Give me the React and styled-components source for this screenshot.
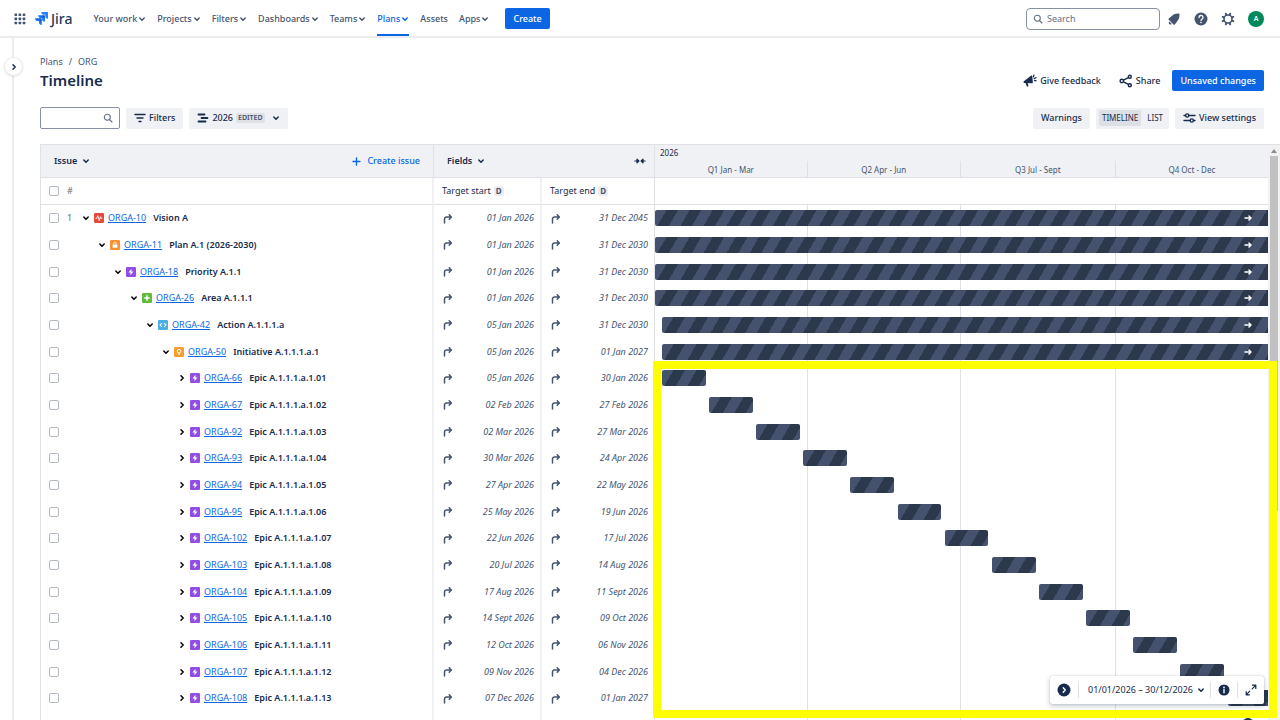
import { useState } from "react";
import styled, { createGlobalStyle, css } from "styled-components";

const DAY = 24 * 60 * 60 * 1000;
const RANGE_START = Date.UTC(2026, 0, 1);
const RANGE_DAYS = 364;

const navItems = [
  { label: "Your work", menu: true },
  { label: "Projects", menu: true },
  { label: "Filters", menu: true },
  { label: "Dashboards", menu: true },
  { label: "Teams", menu: true },
  { label: "Plans", menu: true, active: true },
  { label: "Assets" },
  { label: "Apps", menu: true },
];

const quarters = ["Q1 Jan - Mar", "Q2 Apr - Jun", "Q3 Jul - Sept", "Q4 Oct - Dec"];

const issues = [
  { key: "ORGA-10", name: "Vision A", type: "vision", level: 0, start: "2026-01-01", end: "2045-12-31" },
  { key: "ORGA-11", name: "Plan A.1 (2026-2030)", type: "plan", level: 1, start: "2026-01-01", end: "2030-12-31" },
  { key: "ORGA-18", name: "Priority A.1.1", type: "epic", level: 2, start: "2026-01-01", end: "2030-12-31" },
  { key: "ORGA-26", name: "Area A.1.1.1", type: "area", level: 3, start: "2026-01-01", end: "2030-12-31" },
  { key: "ORGA-42", name: "Action A.1.1.1.a", type: "action", level: 4, start: "2026-01-05", end: "2030-12-31" },
  { key: "ORGA-50", name: "Initiative A.1.1.1.a.1", type: "initiative", level: 5, start: "2026-01-05", end: "2027-01-01" },
  { key: "ORGA-66", name: "Epic A.1.1.1.a.1.01", type: "epic", level: 6, start: "2026-01-05", end: "2026-01-30" },
  { key: "ORGA-67", name: "Epic A.1.1.1.a.1.02", type: "epic", level: 6, start: "2026-02-02", end: "2026-02-27" },
  { key: "ORGA-92", name: "Epic A.1.1.1.a.1.03", type: "epic", level: 6, start: "2026-03-02", end: "2026-03-27" },
  { key: "ORGA-93", name: "Epic A.1.1.1.a.1.04", type: "epic", level: 6, start: "2026-03-30", end: "2026-04-24" },
  { key: "ORGA-94", name: "Epic A.1.1.1.a.1.05", type: "epic", level: 6, start: "2026-04-27", end: "2026-05-22" },
  { key: "ORGA-95", name: "Epic A.1.1.1.a.1.06", type: "epic", level: 6, start: "2026-05-25", end: "2026-06-19" },
  { key: "ORGA-102", name: "Epic A.1.1.1.a.1.07", type: "epic", level: 6, start: "2026-06-22", end: "2026-07-17" },
  { key: "ORGA-103", name: "Epic A.1.1.1.a.1.08", type: "epic", level: 6, start: "2026-07-20", end: "2026-08-14" },
  { key: "ORGA-104", name: "Epic A.1.1.1.a.1.09", type: "epic", level: 6, start: "2026-08-17", end: "2026-09-11" },
  { key: "ORGA-105", name: "Epic A.1.1.1.a.1.10", type: "epic", level: 6, start: "2026-09-14", end: "2026-10-09" },
  { key: "ORGA-106", name: "Epic A.1.1.1.a.1.11", type: "epic", level: 6, start: "2026-10-12", end: "2026-11-06" },
  { key: "ORGA-107", name: "Epic A.1.1.1.a.1.12", type: "epic", level: 6, start: "2026-11-09", end: "2026-12-04" },
  { key: "ORGA-108", name: "Epic A.1.1.1.a.1.13", type: "epic", level: 6, start: "2026-12-07", end: "2027-01-01" },
];

const months = ["Jan", "Feb", "Mar", "Apr", "May", "Jun", "Jul", "Aug", "Sept", "Oct", "Nov", "Dec"];

function formatDate(iso) {
  const [y, m, d] = iso.split("-");
  return `${d} ${months[Number(m) - 1]} ${y}`;
}

function barRange({ start, end }) {
  const from = (Date.parse(start) - RANGE_START) / DAY;
  const to = (Date.parse(end) - RANGE_START) / DAY + 1;
  const shownTo = Math.min(to, RANGE_DAYS);
  return {
    left: `${(from / RANGE_DAYS) * 100}%`,
    width: `${((shownTo - from) / RANGE_DAYS) * 100}%`,
    overflows: to > RANGE_DAYS,
  };
}

/* ---------- icons ---------- */

const Chevron = ({ right, size = 8 }) => (
  <svg width={size} height={size} viewBox="0 0 8 8" fill="none" stroke="currentColor" strokeWidth="1.5" strokeLinecap="round" strokeLinejoin="round" aria-hidden="true">
    <path d={right ? "M3 1.8L5.2 4L3 6.2" : "M1.8 3L4 5.2L6.2 3"} />
  </svg>
);

const AppsIcon = () => (
  <svg width="12" height="12" viewBox="0 0 12 12" fill="currentColor" aria-hidden="true">
    {[0.5, 4.6, 8.7].map((y) =>
      [0.5, 4.6, 8.7].map((x) => <rect key={`${x}-${y}`} x={x} y={y} width="2.6" height="2.6" rx="0.6" />)
    )}
  </svg>
);

const JiraMark = () => (
  <svg width="13" height="13" viewBox="0 0 24 24" aria-hidden="true">
    <defs>
      <linearGradient id="jiraMid" x1="1" y1="0" x2="0.4" y2="0.6">
        <stop offset="0.1" stopColor="#0052cc" />
        <stop offset="1" stopColor="#2684ff" />
      </linearGradient>
    </defs>
    <path fill="#2684ff" d="M23.2 0H11.6a5.2 5.2 0 0 0 5.2 5.2h2.1v2a5.2 5.2 0 0 0 5.1 5.2V.9a.9.9 0 0 0-.8-.9z" />
    <path fill="url(#jiraMid)" d="M17.4 5.8H5.8a5.2 5.2 0 0 0 5.2 5.2h2.1v2.1a5.2 5.2 0 0 0 5.2 5.1V6.7a.9.9 0 0 0-.9-.9z" />
    <path fill="url(#jiraMid)" d="M11.6 11.6H0a5.2 5.2 0 0 0 5.2 5.2h2.1v2.1a5.2 5.2 0 0 0 5.2 5.1V12.5a.9.9 0 0 0-.9-.9z" />
  </svg>
);

const SearchIcon = () => (
  <svg width="10" height="10" viewBox="0 0 10 10" fill="none" stroke="currentColor" strokeWidth="1.1" strokeLinecap="round" aria-hidden="true">
    <circle cx="4.3" cy="4.3" r="3" />
    <path d="M6.6 6.6L9 9" />
  </svg>
);

const BellIcon = () => (
  <svg width="14" height="14" viewBox="0 0 14 14" fill="currentColor" aria-hidden="true">
    <path d="M11.9 1.6C9.4 1.3 6.7 2.1 5.1 3.7L1.8 6.4c-.5.4-.4.9 0 1.3l4.7 4.7c.4.4.9.5 1.3 0l2.6-3.5c1.6-1.6 2.3-4.3 2.1-6.7a.6.6 0 0 0-.6-.6z" />
    <path d="M2.3 9.4l2.5 2.5c-.7.7-1.8.7-2.5 0s-.7-1.8 0-2.5z" />
  </svg>
);

const HelpIcon = () => (
  <svg width="14" height="14" viewBox="0 0 14 14" aria-hidden="true">
    <circle cx="7" cy="7" r="6.5" fill="currentColor" />
    <path d="M5 5.5a2 2 0 1 1 3 1.7c-.7.4-1 .7-1 1.3" fill="none" stroke="#fff" strokeWidth="1.3" strokeLinecap="round" />
    <circle cx="7" cy="10.5" r="0.8" fill="#fff" />
  </svg>
);

const GearIcon = () => (
  <svg width="14" height="14" viewBox="0 0 14 14" fill="none" stroke="currentColor" aria-hidden="true">
    <circle cx="7" cy="7" r="4" strokeWidth="1.6" />
    {[22.5, 67.5, 112.5, 157.5, 202.5, 247.5, 292.5, 337.5].map((a) => (
      <path key={a} d="M7 2.6V1.3" strokeWidth="2" strokeLinecap="round" transform={`rotate(${a} 7 7)`} />
    ))}
  </svg>
);

const MegaphoneIcon = () => (
  <svg width="14" height="13" viewBox="0 0 14 13" fill="currentColor" aria-hidden="true">
    <path d="M8.2 1.6L.9 7.3c-.7.6-.4 1.6.5 1.7l7.7.3c.5 0 .8-.4.7-.9L9.3 2.1c-.1-.6-.6-.8-1.1-.5z" />
    <path d="M2.6 9l1.1 2.9c.2.5.7.7 1.2.5s.7-.7.5-1.2L4.6 9z" />
    <g stroke="currentColor" strokeWidth="1.2" strokeLinecap="round">
      <path d="M10.4 2.8L11 1M11.2 4.5l1.8-.9M11.4 6.3l1.7.5" />
    </g>
  </svg>
);

const ShareIcon = () => (
  <svg width="14" height="14" viewBox="0 0 14 14" fill="none" stroke="currentColor" strokeWidth="1.4" aria-hidden="true">
    <circle cx="2.8" cy="7" r="1.7" />
    <circle cx="10.8" cy="2.8" r="1.5" />
    <circle cx="10.8" cy="11.2" r="1.5" />
    <path d="M4.4 6.2L9.4 3.6M4.4 7.8l5 2.6" />
  </svg>
);

const FilterIcon = () => (
  <svg width="12" height="10" viewBox="0 0 12 10" fill="none" stroke="currentColor" strokeWidth="1.4" strokeLinecap="round" aria-hidden="true">
    <path d="M1 1.5h10M3 5h6M5 8.5h2" />
  </svg>
);

const PlanIcon = () => (
  <svg width="12" height="10" viewBox="0 0 12 10" fill="none" stroke="currentColor" strokeWidth="1.8" strokeLinecap="round" aria-hidden="true">
    <path d="M1.5 1.5h6M4.5 5h6M1.5 8.5h7" />
  </svg>
);

const SettingsIcon = () => (
  <svg width="13" height="12" viewBox="0 0 13 12" fill="none" stroke="currentColor" strokeWidth="1.4" strokeLinecap="round" aria-hidden="true">
    <path d="M1 3.5h1.5M6 3.5h6M1 8.5h6M10.5 8.5H12" />
    <circle cx="4.2" cy="3.5" r="1.6" />
    <circle cx="8.8" cy="8.5" r="1.6" />
  </svg>
);

const PlusIcon = () => (
  <svg width="9" height="9" viewBox="0 0 9 9" stroke="currentColor" strokeWidth="1.4" strokeLinecap="round" aria-hidden="true">
    <path d="M4.5 1v7M1 4.5h7" />
  </svg>
);

const CollapseIcon = () => (
  <svg width="12" height="8" viewBox="0 0 12 8" fill="currentColor" stroke="currentColor" strokeWidth="1.2" strokeLinecap="round" strokeLinejoin="round" aria-hidden="true">
    <path d="M.8 4H3M3 2.200L4.900 4L3 5.800zM11.200 4H9M9 2.200L7.100 4L9 5.800z" />
  </svg>
);

const RollUpIcon = () => (
  <svg width="10" height="11" viewBox="0 0 10 11" fill="none" stroke="currentColor" strokeWidth="1.5" strokeLinecap="round" strokeLinejoin="round" aria-hidden="true">
    <path d="M1.5 10V6a2 2 0 0 1 2-2H8.3M6.2 1.8L8.4 4L6.2 6.2" />
  </svg>
);

const ArrowIcon = () => (
  <svg width="8" height="8" viewBox="0 0 8 8" fill="none" stroke="currentColor" strokeWidth="1.5" strokeLinecap="round" strokeLinejoin="round" aria-hidden="true">
    <path d="M1 4h6M5 2L7 4L5 6" />
  </svg>
);

const CircleChevronIcon = () => (
  <svg width="14" height="14" viewBox="0 0 14 14" aria-hidden="true">
    <circle cx="7" cy="7" r="6.5" fill="currentColor" />
    <path d="M6.2 4.8L8.3 7L6.2 9.2" fill="none" stroke="#fff" strokeWidth="1.4" strokeLinecap="round" strokeLinejoin="round" />
  </svg>
);

const InfoIcon = () => (
  <svg width="12" height="12" viewBox="0 0 12 12" aria-hidden="true">
    <circle cx="6" cy="6" r="5.5" fill="currentColor" />
    <circle cx="6" cy="3.5" r="0.9" fill="#fff" />
    <path d="M6 5.6V8.7" stroke="#fff" strokeWidth="1.4" strokeLinecap="round" />
  </svg>
);

const ExpandIcon = () => (
  <svg width="12" height="12" viewBox="0 0 12 12" fill="none" stroke="currentColor" strokeWidth="1.2" strokeLinecap="round" strokeLinejoin="round" aria-hidden="true">
    <path d="M7.5 1.2h3.3v3.3M10.6 1.4L7.2 4.8M4.5 10.8H1.2V7.5M1.4 10.6l3.4-3.4" />
  </svg>
);

const typeIcons = {
  vision: { color: "#e5493a", art: <path d="M1.5 5.2h1L3.6 2.6L5 7.2L6.3 3.6L7 5.2h1" fill="none" stroke="#fff" strokeWidth="0.9" strokeLinejoin="round" /> },
  plan: {
    color: "#f79232",
    art: (
      <>
        <rect x="2.5" y="4.3" width="4.6" height="3.2" rx="0.4" fill="#fff" />
        <path d="M3.6 4.3V3.3a1.2 1.2 0 0 1 2.4 0v1" fill="none" stroke="#fff" strokeWidth="0.8" />
      </>
    ),
  },
  epic: { color: "#904ee2", art: <path d="M5.3 1.6L2.4 5.3h2L4.2 8L7.2 4.3h-2z" fill="#fff" /> },
  area: { color: "#63ba3c", art: <path d="M4.8 2.2v5.2M2.2 4.8h5.2" stroke="#fff" strokeWidth="1.4" /> },
  action: { color: "#4bade8", art: <path d="M3.7 3L2 4.8L3.7 6.6M5.9 3L7.6 4.8L5.9 6.6" fill="none" stroke="#fff" strokeWidth="1" /> },
  initiative: {
    color: "#f79f2d",
    art: (
      <>
        <circle cx="4.8" cy="4" r="1.7" fill="none" stroke="#fff" strokeWidth="0.9" />
        <path d="M4.8 5.7V7.6" stroke="#fff" strokeWidth="1.2" />
      </>
    ),
  },
};

const TypeIcon = ({ type }) => (
  <svg width="10" height="10" viewBox="0 0 9.6 9.6" role="img" aria-label={type}>
    <rect width="9.6" height="9.6" rx="1.2" fill={typeIcons[type].color} />
    {typeIcons[type].art}
  </svg>
);

/* ---------- page ---------- */

export default function App() {
  const [view, setView] = useState("TIMELINE");

  return (
    <>
      <GlobalStyle />
      <Page>
        <TopBar>
          <IconButton aria-label="Switch apps">
            <AppsIcon />
          </IconButton>
          <Logo href="#home">
            <JiraMark />
            Jira
          </Logo>
          <Nav>
            {navItems.map((item) => (
              <NavLink key={item.label} href="#nav" $active={item.active}>
                {item.label}
                {item.menu && <Chevron />}
              </NavLink>
            ))}
          </Nav>
          <Button $primary>Create</Button>
          <TopActions>
            <SearchBox>
              <SearchIcon />
              <input type="search" aria-label="Search" placeholder="Search" />
            </SearchBox>
            <IconButton aria-label="Notifications">
              <BellIcon />
            </IconButton>
            <IconButton aria-label="Help">
              <HelpIcon />
            </IconButton>
            <IconButton aria-label="Settings">
              <GearIcon />
            </IconButton>
            <Avatar aria-label="Account">A</Avatar>
          </TopActions>
        </TopBar>

        <Body>
          <Rail>
            <RailToggle aria-label="Expand sidebar">
              <Chevron right />
            </RailToggle>
          </Rail>

          <Main>
            <Heading>
              <div>
                <Breadcrumbs aria-label="Breadcrumbs">
                  <a href="#plans">Plans</a>
                  <span>/</span>
                  <a href="#org">ORG</a>
                </Breadcrumbs>
                <Title>Timeline</Title>
              </div>
              <HeadingActions>
                <Button $subtle>
                  <MegaphoneIcon />
                  Give feedback
                </Button>
                <Button $subtle>
                  <ShareIcon />
                  Share
                </Button>
                <Button $primary>Unsaved changes</Button>
              </HeadingActions>
            </Heading>

            <Toolbar>
              <IssueSearch>
                <input type="text" aria-label="Search issues" />
                <SearchIcon />
              </IssueSearch>
              <Button>
                <FilterIcon />
                Filters
              </Button>
              <Button>
                <PlanIcon />
                2026
                <Lozenge>EDITED</Lozenge>
                <Chevron />
              </Button>
              <Spacer />
              <Button>Warnings</Button>
              <Segmented>
                {["TIMELINE", "LIST"].map((name) => (
                  <Segment key={name} $on={view === name} aria-pressed={view === name} onClick={() => setView(name)}>
                    {name}
                  </Segment>
                ))}
              </Segmented>
              <Button>
                <SettingsIcon />
                View settings
              </Button>
            </Toolbar>

            <Board>
              <IssueTable>
                <colgroup>
                  <IssueCol />
                  <StartCol />
                  <EndCol />
                </colgroup>
                <thead>
                  <GroupRow>
                    <th>
                      <GroupHead>
                        <HeadButton>
                          Issue <Chevron />
                        </HeadButton>
                        <CreateIssue>
                          <PlusIcon />
                          Create issue
                        </CreateIssue>
                      </GroupHead>
                    </th>
                    <th colSpan={2}>
                      <GroupHead>
                        <HeadButton>
                          Fields <Chevron />
                        </HeadButton>
                        <IconButton aria-label="Collapse fields">
                          <CollapseIcon />
                        </IconButton>
                      </GroupHead>
                    </th>
                  </GroupRow>
                  <FieldRow>
                    <th>
                      <IssueCell>
                        <Checkbox aria-label="Select all issues" />
                        <RowNumber>#</RowNumber>
                      </IssueCell>
                    </th>
                    <th>
                      <FieldName>
                        Target start <Tag>D</Tag>
                      </FieldName>
                    </th>
                    <th>
                      <FieldName>
                        Target end <Tag>D</Tag>
                      </FieldName>
                    </th>
                  </FieldRow>
                </thead>
                <tbody>
                  {issues.map((issue, i) => (
                    <IssueRow key={issue.key}>
                      <td>
                        <IssueCell>
                          <Checkbox aria-label={`Select ${issue.key}`} />
                          <RowNumber>{i === 0 ? "1" : ""}</RowNumber>
                          <Tree $level={issue.level}>
                            <TreeToggle aria-label={`Toggle ${issue.key}`}>
                              <Chevron right={issue.level === 6} />
                            </TreeToggle>
                            <TypeIcon type={issue.type} />
                            <IssueKey href={`#${issue.key}`}>{issue.key}</IssueKey>
                            <Summary>{issue.name}</Summary>
                          </Tree>
                        </IssueCell>
                      </td>
                      <td>
                        <DateCell>
                          <RollUpIcon />
                          {formatDate(issue.start)}
                        </DateCell>
                      </td>
                      <td>
                        <DateCell>
                          <RollUpIcon />
                          {formatDate(issue.end)}
                        </DateCell>
                      </td>
                    </IssueRow>
                  ))}
                  <IssueRow aria-hidden="true">
                    <td />
                    <td />
                    <td />
                  </IssueRow>
                </tbody>
              </IssueTable>

              <Timeline>
                <TimelineHead>
                  <Year>2026</Year>
                  <QuarterGrid>
                    {quarters.map((q) => (
                      <Quarter key={q}>{q}</Quarter>
                    ))}
                  </QuarterGrid>
                </TimelineHead>
                <SprintRow />
                <Chart>
                  <GridLines aria-hidden="true">
                    {quarters.map((q) => (
                      <i key={q} />
                    ))}
                  </GridLines>
                  {issues.map((issue) => {
                    const { left, width, overflows } = barRange(issue);
                    return (
                      <ChartRow key={issue.key}>
                        <Bar $open={overflows} style={{ marginLeft: left, width }}>
                          {overflows && <ArrowIcon />}
                        </Bar>
                      </ChartRow>
                    );
                  })}
                </Chart>
                <Highlight />
              </Timeline>

              <ScrollTrack aria-hidden="true">
                <ScrollArrow />
                <ScrollThumb />
              </ScrollTrack>
            </Board>
          </Main>
        </Body>

        <RangeBar>
          <RangeButton aria-label="Hide range bar">
            <CircleChevronIcon />
          </RangeButton>
          <RangeButton $wide>
            01/01/2026 – 30/12/2026
            <Chevron />
          </RangeButton>
          <RangeButton aria-label="Legend">
            <InfoIcon />
          </RangeButton>
          <RangeButton aria-label="Full screen">
            <ExpandIcon />
          </RangeButton>
        </RangeBar>
        <ScrollHint aria-hidden="true" />
      </Page>
    </>
  );
}

/* ---------- styles ---------- */

const GlobalStyle = createGlobalStyle`
  * {
    box-sizing: border-box;
  }
  body {
    margin: 0;
    background: #fff;
    color: #172b4d;
    font-family: "Noto Sans", "Open Sans", sans-serif;
    font-size: 9px;
    line-height: 16px;
  }
  button, input {
    font: inherit;
    color: inherit;
  }
  button {
    border: none;
    background: none;
    padding: 0;
    cursor: pointer;
  }
  a {
    color: inherit;
    text-decoration: none;
  }
  svg {
    flex: none;
    display: block;
  }
`;

const Page = styled.div`
  position: relative;
  display: flex;
  flex-direction: column;
  height: 100vh;
  overflow: hidden;
`;

const TopBar = styled.header`
  display: flex;
  align-items: center;
  flex: none;
  height: 38px;
  padding: 1px 16px 0 14px;
  border-bottom: 2px solid #ebecf0;
  color: #44546f;
`;

const IconButton = styled.button`
  display: flex;
  align-items: center;
  justify-content: center;
`;

const Logo = styled.a`
  display: flex;
  align-items: center;
  gap: 3px;
  margin: 0 21px 0 9px;
  color: #253858;
  font-size: 14px;
  font-weight: 500;
`;

const Nav = styled.nav`
  display: flex;
  align-self: stretch;
  gap: 11px;
  margin-right: 16px;
`;

const NavLink = styled.a`
  display: flex;
  align-items: center;
  gap: 1px;
  font-weight: 500;
  border-bottom: 2px solid transparent;
  padding-top: 2px;

  ${({ $active }) =>
    $active &&
    css`
      color: #0c66e4;
      border-color: #0c66e4;
    `}
`;

const Button = styled.button`
  display: flex;
  align-items: center;
  gap: 3px;
  height: 21px;
  padding: 0 8px;
  border-radius: 2px;
  background: #f0f1f4;
  color: #172b4d;
  font-weight: 500;
  white-space: nowrap;

  ${({ $subtle }) => $subtle && "padding: 0 6px; background: none;"}
  ${({ $primary }) => $primary && "background: #0c66e4; color: #fff;"}
`;

const TopActions = styled.div`
  display: flex;
  align-items: center;
  gap: 13px;
  margin-left: auto;
`;

const SearchBox = styled.label`
  display: flex;
  align-items: center;
  gap: 4px;
  width: 134px;
  height: 22px;
  padding: 0 6px;
  margin-right: -6px;
  border: 1px solid #8590a2;
  border-radius: 4px;
  color: #626f86;

  input {
    min-width: 0;
    flex: 1;
    padding: 0;
    border: none;
    outline: none;
    background: none;
  }
  input::placeholder {
    color: #626f86;
  }
`;

const Avatar = styled.button`
  width: 16px;
  height: 16px;
  border-radius: 50%;
  background: #00875a;
  color: #fff;
  font-size: 7px;
  font-weight: 600;
`;

const Body = styled.div`
  display: flex;
  flex: 1;
  min-height: 0;
`;

const Rail = styled.aside`
  position: relative;
  flex: none;
  width: 14px;
  border-right: 2px solid #ebecf0;
`;

const RailToggle = styled.button`
  position: absolute;
  top: 20px;
  right: -10px;
  display: flex;
  align-items: center;
  justify-content: center;
  width: 17px;
  height: 17px;
  border-radius: 50%;
  background: #fff;
  box-shadow: 0 0 0 1px #ebecf0, 0 1px 3px rgba(9, 30, 66, 0.2);
`;

const Main = styled.main`
  flex: 1;
  min-width: 0;
  display: flex;
  flex-direction: column;
  padding: 16px 0 0 26px;
`;

const Heading = styled.div`
  display: flex;
  justify-content: space-between;
  padding-right: 16px;
`;

const Breadcrumbs = styled.nav`
  display: flex;
  gap: 6px;
  color: #44546f;
`;

const Title = styled.h1`
  margin: 0;
  font-size: 15px;
  font-weight: 600;
  line-height: 21px;
`;

const HeadingActions = styled.div`
  display: flex;
  align-items: center;
  gap: 6px;
  padding-top: 16px;
  align-self: flex-start;
`;

const Toolbar = styled.div`
  display: flex;
  align-items: center;
  gap: 6px;
  margin: 16px 16px 15px 0;
`;

const Spacer = styled.div`
  flex: 1;
`;

const IssueSearch = styled.label`
  display: flex;
  align-items: center;
  width: 80px;
  height: 22px;
  padding: 0 6px;
  border: 1px solid #8590a2;
  border-radius: 2px;
  color: #626f86;

  input {
    flex: 1;
    min-width: 0;
    border: none;
    outline: none;
    background: none;
  }
`;

const Lozenge = styled.span`
  padding: 0 2px;
  margin-right: 4px;
  border-radius: 2px;
  background: #dfe1e6;
  color: #44546f;
  font-size: 7px;
  font-weight: 600;
  line-height: 10px;
`;

const Segmented = styled.div`
  display: flex;
  align-items: center;
  gap: 3px;
  height: 21px;
  padding: 0 3px;
  border-radius: 2px;
  background: #f0f1f4;
`;

const Segment = styled.button`
  padding: 0 3px;
  border-radius: 2px;
  font-size: 8px;
  background: ${({ $on }) => ($on ? "#dcdfe4" : "none")};
`;

const Board = styled.section`
  display: grid;
  grid-template-columns: 614px minmax(0, 1fr) 12px;
  flex: 1;
  min-height: 0;
  border-top: 1px solid #dfe1e6;
  border-left: 1px solid #dfe1e6;
`;

const IssueTable = styled.table`
  width: 100%;
  align-self: start;
  table-layout: fixed;
  border-collapse: separate;
  border-spacing: 0;

  th,
  td {
    padding: 0;
    text-align: left;
    font-weight: 400;
    border-right: 2px solid #f0f1f4;
  }
  th:last-child,
  td:last-child {
    border-right: 1px solid #dfe1e6;
  }
`;

const IssueCol = styled.col`
  width: 393px;
`;

const StartCol = styled.col`
  width: 108px;
`;

const EndCol = styled.col`
  width: 113px;
`;

const GroupRow = styled.tr`
  height: 33px;

  th {
    background: #f0f1f4;
    border-bottom: 1px solid #dfe1e6;
    border-right: 1px solid #dfe1e6;
  }
`;

const GroupHead = styled.div`
  display: flex;
  align-items: center;
  justify-content: space-between;
  padding: 0 8px 0 13px;
`;

const HeadButton = styled.button`
  display: flex;
  align-items: center;
  gap: 5px;
  font-weight: 600;
`;

const CreateIssue = styled.button`
  display: flex;
  align-items: center;
  gap: 6px;
  padding-right: 5px;
  color: #0c66e4;
  font-weight: 500;
`;

const FieldRow = styled.tr`
  height: 27px;

  th {
    border-bottom: 1px solid #dfe1e6;
  }
`;

const FieldName = styled.div`
  display: flex;
  align-items: center;
  gap: 3px;
  padding-left: 8px;
`;

const Tag = styled.span`
  padding: 0 2px;
  border-radius: 2px;
  background: #ebecf0;
  color: #44546f;
  font-size: 8px;
  font-weight: 700;
  line-height: 10px;
`;

const IssueRow = styled.tr`
  height: 27px;

  &:nth-child(3n + 1) {
    height: 26px;
  }
`;

const IssueCell = styled.div`
  display: flex;
  align-items: center;
  padding-left: 8px;
`;

const Checkbox = styled.input.attrs({ type: "checkbox" })`
  appearance: none;
  flex: none;
  width: 10px;
  height: 10px;
  margin: 0;
  border: 1px solid #b3b9c4;
  border-radius: 2px;
  background: #fff;

  &:checked {
    background: #0c66e4;
  }
`;

const RowNumber = styled.span`
  width: 22px;
  padding-left: 8px;
  color: #626f86;
`;

const Tree = styled.div`
  display: flex;
  align-items: center;
  gap: 4px;
  padding-left: ${({ $level }) => $level * 16}px;
`;

const TreeToggle = styled(IconButton)`
  width: 9px;
  height: 16px;
  color: #000;
`;

const IssueKey = styled.a`
  color: #0c66e4;
  text-decoration: underline;
`;

const Summary = styled.span`
  margin-left: 3px;
  font-weight: 600;
  white-space: nowrap;
`;

const DateCell = styled.div`
  display: flex;
  align-items: center;
  justify-content: space-between;
  padding: 0 6px 0 9px;
  color: #44546f;
  font-style: italic;
`;

const Timeline = styled.div`
  position: relative;
  display: flex;
  flex-direction: column;
`;

const TimelineHead = styled.div`
  display: flex;
  flex-direction: column;
  height: 33px;
  background: #f0f1f4;
  border-bottom: 1px solid #dfe1e6;
  color: #44546f;
  font-size: 8px;
`;

const Year = styled.div`
  padding-left: 5px;
  color: #172b4d;
`;

const QuarterGrid = styled.div`
  display: grid;
  grid-template-columns: 90fr 91fr 92fr 91fr;
`;

const Quarter = styled.div`
  line-height: 18px;
  height: 16px;
  text-align: center;

  & + & {
    border-left: 1px solid #dcdfe4;
  }
`;

const SprintRow = styled.div`
  height: 27px;
  border-bottom: 1px solid #dfe1e6;
`;

const Chart = styled.div`
  position: relative;
  display: grid;
  flex: 1;
  grid-auto-rows: 26px 27px 27px;
`;

const GridLines = styled(QuarterGrid)`
  position: absolute;
  inset: 0;

  i + i {
    border-left: 1px solid #dfe1e6;
  }
`;

const ChartRow = styled.div`
  display: flex;
  align-items: center;
  z-index: 1;
`;

const Bar = styled.div`
  display: flex;
  align-items: center;
  justify-content: flex-end;
  height: 16px;
  padding-right: 16px;
  border-radius: ${({ $open }) => ($open ? "2px 0 0 2px" : "2px")};
  color: #fff;
  background: repeating-linear-gradient(120deg, #44526d 0 10px, #2c384c 10px 20px);
`;

const Highlight = styled.div`
  position: absolute;
  z-index: 2;
  top: 216px;
  left: -2px;
  right: -9px;
  height: 357px;
  border: 8px solid #ff0;
  pointer-events: none;
`;

const ScrollTrack = styled.div`
  display: flex;
  flex-direction: column;
  align-items: center;
  background: #f1f1f1;
`;

const ScrollArrow = styled.span`
  margin: 4px 0 3px;
  border: 3px solid transparent;
  border-top: none;
  border-bottom: 4px solid #8c8c8c;
`;

const ScrollThumb = styled.span`
  width: 8px;
  height: 355px;
  background: #c1c1c1;
`;

const RangeBar = styled.div`
  position: absolute;
  z-index: 3;
  right: 16px;
  bottom: 16px;
  display: flex;
  align-items: center;
  height: 28px;
  background: #fff;
  border-radius: 2px;
  box-shadow: 0 0 1px rgba(9, 30, 66, 0.4), 0 2px 5px rgba(9, 30, 66, 0.25);
`;

const RangeButton = styled.button`
  display: flex;
  align-items: center;
  gap: 4px;
  height: 16px;
  padding: 0 ${({ $wide }) => ($wide ? "5px 0 9px" : "7px")};
  color: #172b4d;

  & + & {
    border-left: 1px solid #dfe1e6;
  }
`;

const ScrollHint = styled.span`
  position: absolute;
  right: 26px;
  bottom: -10px;
  width: 12px;
  height: 12px;
  border-radius: 50%;
  background: #172b4d;
`;
